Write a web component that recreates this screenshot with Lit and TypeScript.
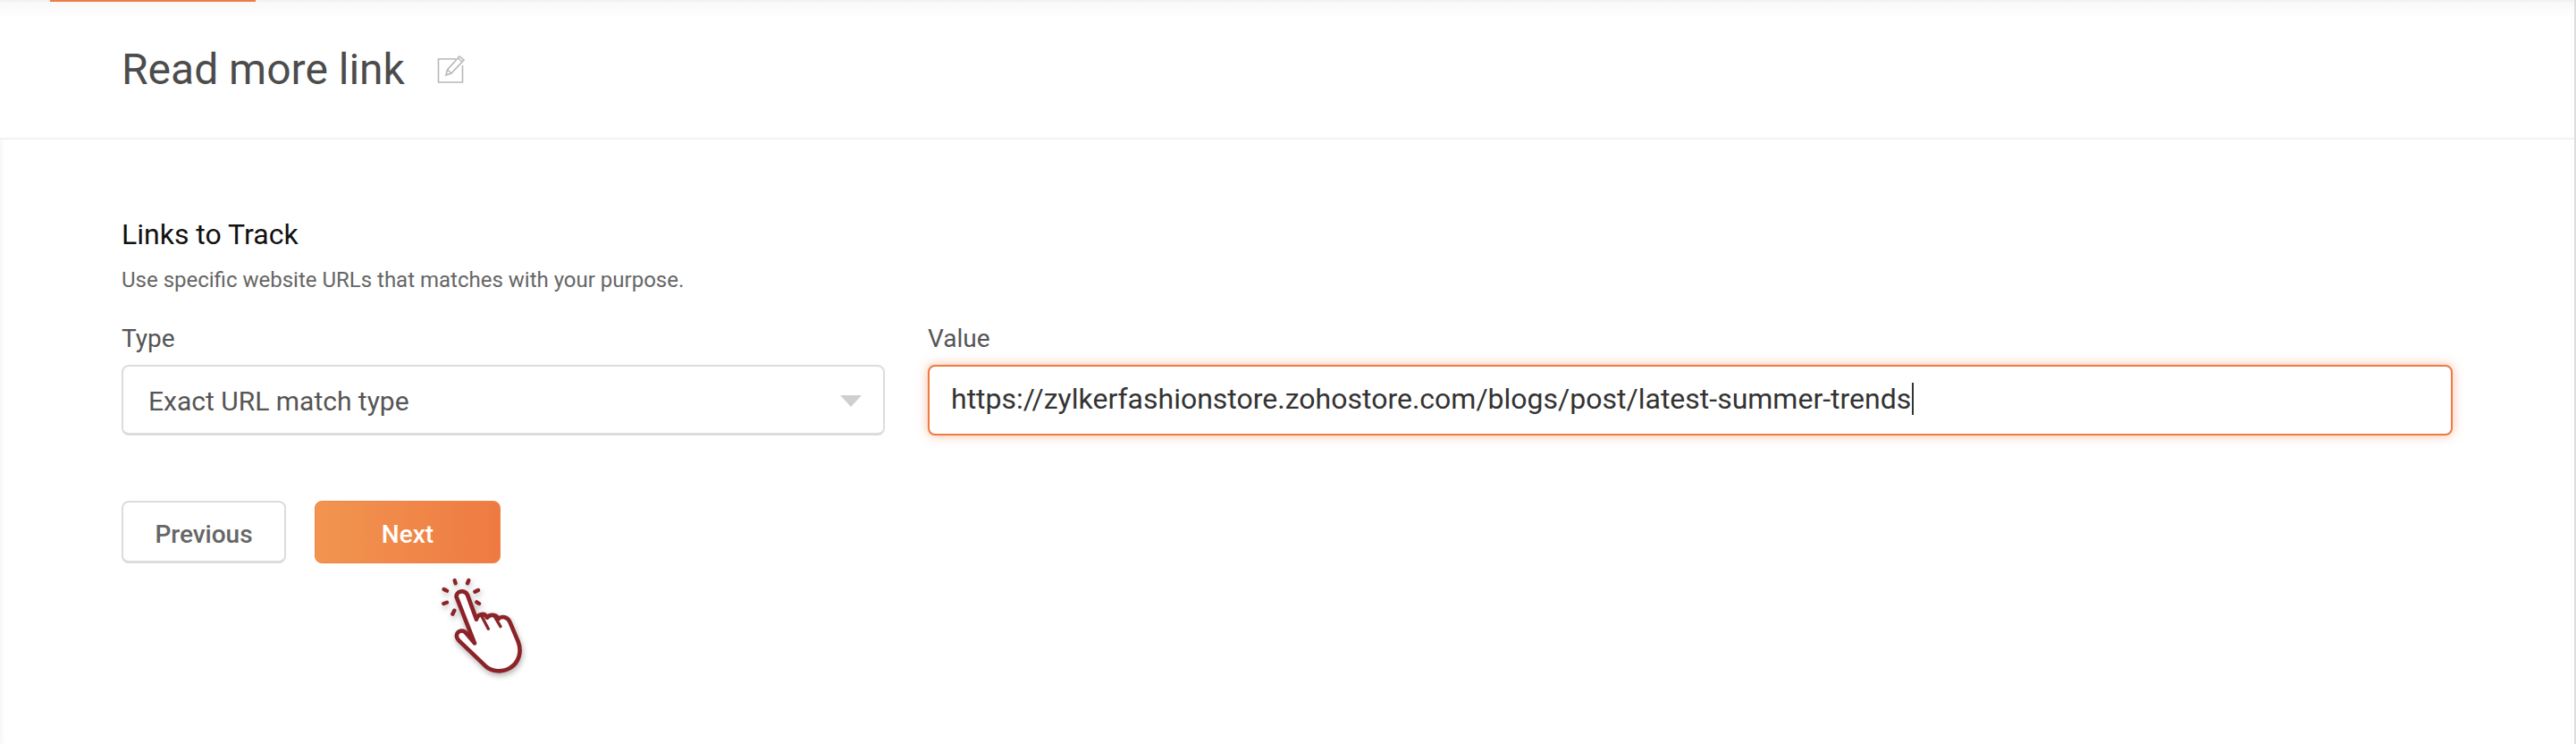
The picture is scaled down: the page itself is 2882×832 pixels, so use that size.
import { LitElement, html, css } from "lit";
import { customElement } from "lit/decorators.js";

@customElement("app-root")
export class AppRoot extends LitElement {
  static styles = css`
    :host { display: block; width: 2882px; height: 832px; font-family: Roboto, "Liberation Sans", sans-serif; background: #fff; position: relative; overflow: hidden; }
    .page { height: 832px; box-sizing: border-box; border-right: 2px solid #dedede; display: flex; flex-direction: column; box-shadow: inset 7px 0 6px -5px #f4f4f4; }
    .topbar { height: 2px; background: #f1f1f1; flex: none; display: flex; padding-left: 56px; }
    .tab { width: 230px; background: #f07c45; height: 2px; }
    .head { height: 154px; flex: none; box-sizing: border-box; border-bottom: 2px solid #f1f1f1; padding: 0 0 0 136px; display: flex; align-items: center; gap: 36px; background: linear-gradient(#f8f8f8, #fff 18px); }
    h1 { margin: 0; font-size: 48px; font-weight: 400; color: #4c4c4c; line-height: 56px; }
    .edit { width: 32px; height: 32px; flex: none; display: block; }
    .body { padding: 86px 136px 0; display: flex; flex-direction: column; }
    h2 { margin: 0; font-size: 32px; font-weight: 400; color: #111; line-height: 40px; }
    .sub { margin: 16px 0 0; font-size: 24px; color: #666; line-height: 30px; }
    .fields { display: flex; gap: 48px; margin-top: 34px; width: 2608px; }
    .field { display: flex; flex-direction: column; }
    .field.type { width: 854px; flex: none; }
    .field.value { width: 1706px; flex: none; }
    label { font-size: 28px; color: #555; line-height: 34px; margin-bottom: 12px; }
    .control { height: 79px; box-sizing: border-box; border-radius: 8px; display: flex; align-items: center; background: #fff; }
    .select { border: 2px solid #dcdcdc; border-bottom-width: 3px; padding: 2px 24px 0 28px; justify-content: space-between; font-size: 30px; color: #555; }
    .arrow { width: 0; height: 0; border-left: 12px solid transparent; border-right: 12px solid transparent; border-top: 13px solid #cfcfcf; }
    .input { border: 2px solid #ef7a42; box-shadow: 0 0 12px rgba(240, 124, 69, .5); padding: 0 0 4px 24px; font-size: 32px; color: #333; }
    .caret { width: 2px; height: 36px; background: #333; margin-left: 1px; }
    .actions { display: flex; gap: 32px; margin-top: 73px; }
    button { font: inherit; font-size: 28px; font-weight: 500; border-radius: 8px; height: 70px; box-sizing: border-box; padding: 5px 0 0; }
    .prev { width: 184px; background: #fff; border: 2px solid #dcdcdc; border-bottom-width: 3px; color: #666; }
    .next { width: 208px; background: linear-gradient(90deg, #f29550, #ee7a42); border: 1px solid #ef8448; color: #fff; }
    .hand { position: absolute; left: 470px; top: 630px; width: 130px; height: 130px; filter: drop-shadow(1px 3px 3px rgba(0,0,0,.3)); }
  `;

  render() {
    return html`
      <div class="page">
        <div class="topbar"><div class="tab"></div></div>
        <div class="head">
          <h1>Read more link</h1>
          <svg class="edit" viewBox="0 0 32 32" fill="none" stroke="#b8b8b8" stroke-width="1.6">
            <path d="M21 4H1.5V30H28.5V11" />
            <path d="M10 22l1.5-6L25 1l5 4L16 20z" fill="#fff" />
            <path d="M23.2 3l5 4M11.5 16l4.5 4" />
          </svg>
        </div>
        <div class="body">
          <h2>Links to Track</h2>
          <p class="sub">Use specific website URLs that matches with your purpose.</p>
          <div class="fields">
            <div class="field type">
              <label>Type</label>
              <div class="control select"><span>Exact URL match type</span><span class="arrow"></span></div>
            </div>
            <div class="field value">
              <label>Value</label>
              <div class="control input"><span>https://zylkerfashionstore.zohostore.com/blogs/post/latest-summer-trends</span><span class="caret"></span></div>
            </div>
          </div>
          <div class="actions">
            <button class="prev">Previous</button>
            <button class="next">Next</button>
          </div>
        </div>
      </div>
      <svg class="hand" viewBox="0 0 390 390" fill="none" stroke="#8b2328" stroke-linecap="round" stroke-linejoin="round">
        <path stroke-width="14" fill="#fff" d="M122 112c-3-16 28-28 37-6l30 82c2-16 26-26 36-6 8-12 30-12 38 4 10-10 30-8 38 10l28 66c13 34 3 70-26 88-26 17-62 14-84-6l-88-84c-20-20 0-42 20-30l32 38z" />
        <path stroke-width="10" d="M207 178l22 42M250 178l20 34" />
        <path stroke-width="13" d="M80 87l10 5M116 57l3 10M163 57l-4 10M195 90l-11 5M190 130l8 5M79 135l11-4M115 158l-6 12" />
      </svg>
    `;
  }
}
